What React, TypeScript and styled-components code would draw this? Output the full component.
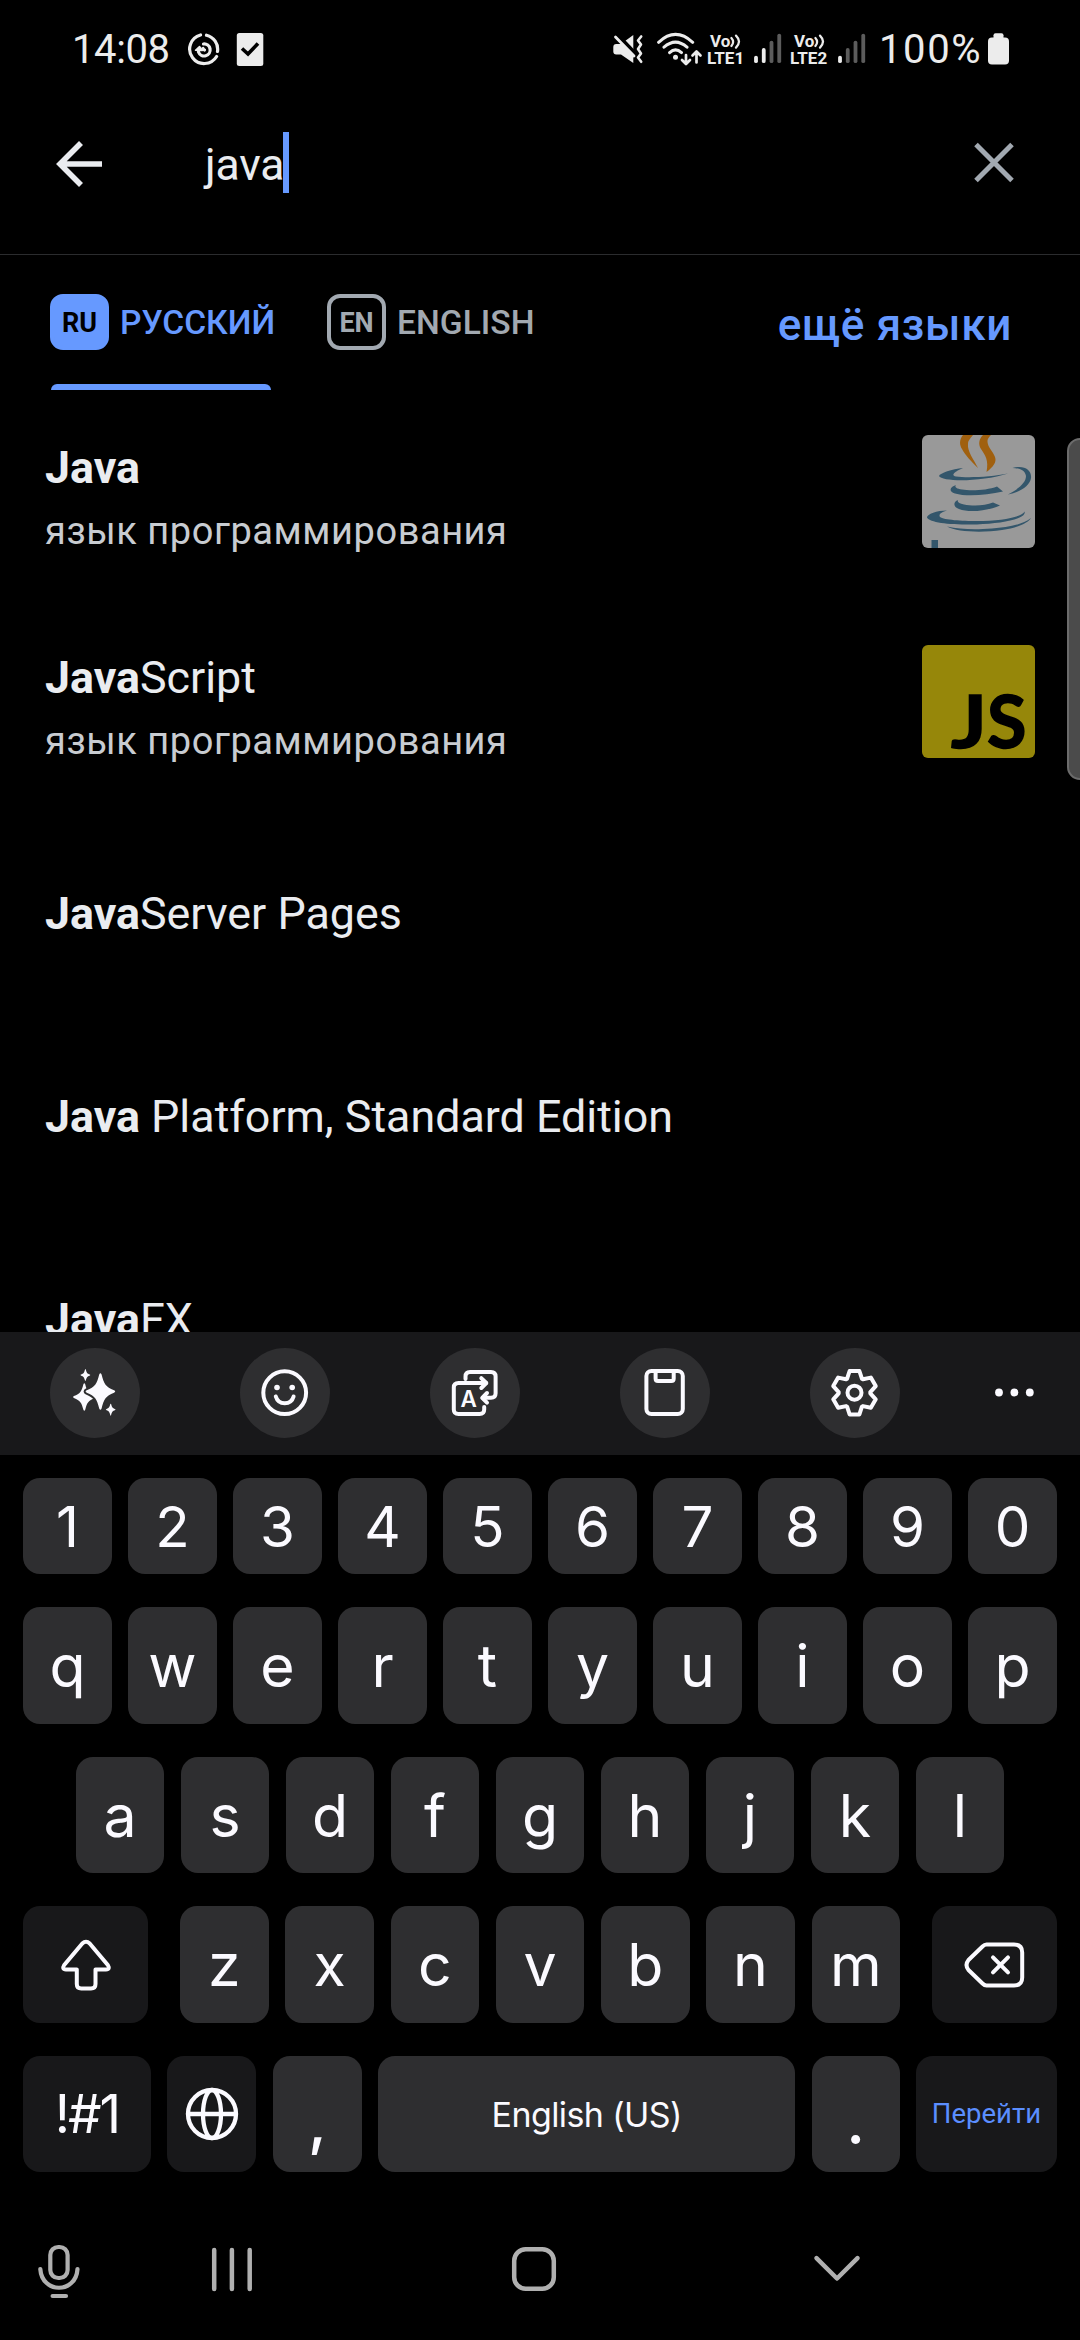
import React from "react";
import styled, { createGlobalStyle } from "styled-components";

const roboto = `Roboto, "Noto Sans", "Liberation Sans", sans-serif`;
const inter = `Inter, Roboto, "Liberation Sans", sans-serif`;

const Global = createGlobalStyle`
  html, body { margin: 0; background: #000; }
  * { box-sizing: border-box; }
  svg { display: block; flex: none; }
`;

const Screen = styled.div`
  width: 1080px;
  height: 2340px;
  background: #000;
  color: #eaecf0;
  font-family: ${roboto};
  display: flex;
  flex-direction: column;
  position: relative;
  overflow: hidden;
`;

/* ---------- status bar ---------- */

const StatusBar = styled.header`
  height: 99px;
  padding: 0 71px 0 72px;
  display: flex;
  align-items: center;
  justify-content: space-between;
  color: #ececec;
`;

const StatusLeft = styled.div`
  display: grid;
  grid-template-columns: 114px 50px 28px;
  align-items: center;
`;

const StatusRight = styled.div`
  display: grid;
  grid-template-columns: 44px 50px 46px 37px 47px 42px 109px 21px;
  align-items: center;
`;

const StatusText = styled.span<{ $spacing?: number }>`
  font-size: 40px;
  line-height: 48px;
  letter-spacing: ${(p) => p.$spacing ?? 0}px;
  white-space: nowrap;
`;

const Volte = styled.div<{ $indent: number }>`
  font-size: 17px;
  line-height: 17px;
  font-weight: 700;
  display: flex;
  flex-direction: column;
  & > div {
    display: flex;
    padding-left: ${(p) => p.$indent}px;
  }
`;

const VolteMark = ({ sim, indent }: { sim: number; indent: number }) => (
  <Volte $indent={indent}>
    <div>
      Vo
      <svg width="12" height="17" viewBox="0 0 12 17" fill="none" stroke="#ececec" strokeWidth="2.2" strokeLinecap="round">
        <path d="M1.4 5q3.4 3.8 0 8M6 2.600q6 6 0 12" />
      </svg>
    </div>
    <span>LTE{sim}</span>
  </Volte>
);

const Signal = ({ level }: { level: number }) => (
  <svg width="30" height="39" viewBox="0 30 30 39" strokeWidth="3.8" strokeLinecap="round">
    {[57.6, 50, 42.6, 35.6].map((top, i) => (
      <path key={top} d={`M${3 + i * 7.75} ${top}V61.2`} stroke={i < level ? "#ececec" : "#5c5c5c"} />
    ))}
  </svg>
);

/* ---------- search header ---------- */

const SearchBar = styled.div`
  height: 156px;
  border-bottom: 1px solid #2b2c2e;
  padding: 0 66px 25px 56px;
  display: flex;
  align-items: center;
`;

const Query = styled.div`
  flex: 1;
  margin-left: 102px;
  display: flex;
  align-items: center;
  font-size: 44.5px;
  line-height: 56px;
  padding-top: 1px;
  letter-spacing: -0.2px;
`;

const Caret = styled.i`
  width: 6px;
  height: 61px;
  background: #6699ff;
  margin: -4px 0 0 -1px;
`;

/* ---------- language tabs ---------- */

const Tabs = styled.nav`
  height: 135px;
  padding: 39px 68px 0 50px;
  display: flex;
  align-items: flex-start;
`;

const Tab = styled.div<{ $active?: boolean }>`
  width: 277px;
  display: flex;
  flex-direction: column;
  color: ${(p) => (p.$active ? "#6699ff" : "#a2a9b1")};
  &::after {
    content: "";
    display: ${(p) => (p.$active ? "block" : "none")};
    width: 220px;
    height: 6px;
    margin: 34px 0 0 1px;
    border-radius: 6px 6px 0 0;
    background: #6699ff;
  }
`;

const TabLabel = styled.div`
  height: 56px;
  display: flex;
  align-items: center;
  gap: 11px;
  font-size: 33.6px;
  font-weight: 500;
  line-height: 56px;
  white-space: nowrap;
  & > span:last-child { padding-top: 2px; }
`;

const Code = styled.span<{ $active?: boolean }>`
  width: 59px;
  height: 56px;
  border-radius: 13px;
  border: 4px solid ${(p) => (p.$active ? "#6699ff" : "#a2a9b1")};
  background: ${(p) => (p.$active ? "#6699ff" : "transparent")};
  color: ${(p) => (p.$active ? "#000" : "#a2a9b1")};
  font-size: 27px;
  font-weight: 700;
  line-height: 51px;
  text-align: center;
`;

const MoreLanguages = styled.div`
  margin-left: auto;
  color: #6699ff;
  font-size: 44px;
  font-weight: 500;
  line-height: 62px;
  letter-spacing: 0.7px;
`;

/* ---------- results ---------- */

const Results = styled.main`
  height: 942px;
  overflow: hidden;
`;

const RichGroup = styled.div`
  padding-bottom: 2px;
`;

const RichRow = styled.div`
  height: 210px;
  padding: 45px 45px 0 45px;
  display: flex;
  justify-content: space-between;
`;

const PlainRow = styled.div`
  height: 203px;
  padding-left: 45px;
  display: flex;
  align-items: center;
`;

const Title = styled.div`
  font-size: 44.8px;
  line-height: 60px;
  color: #eaecf0;
  white-space: pre;
  b { font-weight: 700; }
  ${RichRow} & { margin-top: 3px; }
`;

const Description = styled.div`
  font-size: 38px;
  line-height: 60px;
  margin-top: 3px;
  letter-spacing: 0.55px;
  color: #c8ccd1;
`;

const Thumb = styled.div<{ $bg: string }>`
  width: 113px;
  height: 113px;
  border-radius: 6px;
  background: ${(p) => p.$bg};
  svg { overflow: visible; }
`;

const EdgePanel = styled.div`
  position: absolute;
  top: 438px;
  right: -3px;
  width: 16px;
  height: 342px;
  border: 2px solid #6c6c6c;
  border-radius: 13px 0 0 13px;
  background: #4b4b4b;
`;

/* ---------- keyboard ---------- */

const Toolbar = styled.div`
  height: 123px;
  background: #18181a;
  padding: 16px 50px 0;
  display: flex;
  gap: 100px;
`;

const Tool = styled.div`
  width: 90px;
  height: 90px;
  border-radius: 50%;
  background: #2e2e30;
`;

const More = styled.div`
  width: 50px;
  height: 90px;
  margin-left: -10px;
`;

const Keys = styled.section`
  padding: 23px 23px 0;
  display: flex;
  flex-direction: column;
  gap: 33px;
  color: #fbfaff;
  font-family: ${inter};
`;

const KeyRow = styled.div<{ $h: number; $cols: string; $inset?: number }>`
  height: ${(p) => p.$h}px;
  display: grid;
  grid-template-columns: ${(p) => p.$cols};
  justify-content: space-between;
  padding: 0 ${(p) => p.$inset ?? 0}px;
`;

const Key = styled.div<{ $dark?: boolean; $size?: number; $shift?: number }>`
  border-radius: 17px;
  background: ${(p) => (p.$dark ? "#18181a" : "#2e2e30")};
  font-size: ${(p) => p.$size ?? 59}px;
  display: flex;
  align-items: center;
  justify-content: center;
  padding-top: ${(p) => p.$shift ?? 0}px;
  line-height: 1;
  white-space: nowrap;
`;

const KeyLabel = styled(Key)<{ $spacing?: number }>`
  letter-spacing: ${(p) => p.$spacing ?? 0}px;
`;

const PunctuationKey = styled(Key)`
  font-weight: 500;
`;

const GoKey = styled(Key)`
  color: #5b8eff;
  font-family: ${roboto};
`;

const MiddleKeys = styled.div`
  width: 720px;
  display: grid;
  grid-template-columns: repeat(7, 88.5px);
  justify-content: space-between;
`;

const NavBar = styled.footer`
  height: 168px;
  padding: 67px 0 0 32px;
  display: grid;
  grid-template-columns: 174px 300px 302px 60px;
`;

/* ---------- drawings ---------- */

const line = { fill: "none", stroke: "#fbfaff", strokeWidth: 4, strokeLinecap: "round", strokeLinejoin: "round" } as const;
const nav = { fill: "none", stroke: "#b0b0b0", strokeWidth: 4.5, strokeLinecap: "round", strokeLinejoin: "round" } as const;

/* four-pointed star with concave sides and slightly blunt tips */
const star = (x: number, y: number, w: number, h: number) => {
  const t = w * 0.08;
  const p = (dx: number, dy: number) => `${(x + dx).toFixed(2)} ${(y + dy).toFixed(2)}`;
  return (
    `M${p(t, -h + t)}C${p(w * 0.24, -h * 0.4)} ${p(w * 0.36, -h * 0.26)} ${p(w - t, -t)}Q${p(w + t, 0)} ${p(w - t, t)}` +
    `C${p(w * 0.36, h * 0.26)} ${p(w * 0.24, h * 0.4)} ${p(t, h - t)}Q${p(0, h + t)} ${p(-t, h - t)}` +
    `C${p(-w * 0.24, h * 0.4)} ${p(-w * 0.36, h * 0.26)} ${p(-w + t, t)}Q${p(-w - t, 0)} ${p(-w + t, -t)}` +
    `C${p(-w * 0.36, -h * 0.26)} ${p(-w * 0.24, -h * 0.4)} ${p(-t, -h + t)}Q${p(0, -h - t)} ${p(t, -h + t)}Z`
  );
};

const gearPoints = Array.from({ length: 6 }, (_, k) => (k * Math.PI) / 3)
  .flatMap((t) =>
    [[-7.4, -14], [-4.9, -21.7], [4.9, -21.7], [7.4, -14]].map(
      ([x, y]) => `${(x * Math.cos(t) - y * Math.sin(t)).toFixed(2)},${(x * Math.sin(t) + y * Math.cos(t)).toFixed(2)}`
    )
  )
  .join(" ");

const JavaLogo = () => (
  <svg width="113" height="113" viewBox="0 0 113 113" fill="#33566b">
    <g fill="#a0600f">
      <path d="M41 0C37 5 37.500 10 40 14C43 20 49 26 56 33C52 25 45 16 46 9C46 5 49 3 51 0Z" />
      <path d="M61 0C57 4 56 9 59 14C63 20 67 25 64.500 37C71 32 75 27 73 22C71 16 66 13 65.500 7C65 4 67 2 69 0Z" />
    </g>
    <path d="M41 33C30 34 18 38 17 41C20 47 60 47 86 38.500C70 42 45 43 34 41.500C27 40 36 35 41 33Z" />
    <path d="M90.500 33C102 29.500 110 35 109 43C108 51 98 57 86 59.500C96 54 104 48 104 41C103 35 98 33.500 90.500 33Z" />
    <path d="M34 50C27 52 27 57 33 58.500C45 62 65 60 81 56.500L75 51.500C65 55.500 48 56 40 54.500C35 54 32 52 34 50Z" />
    <path d="M36 65C31 67 31 72 37 74C47 78 65 76 78 70.500L71 67.500C63 71 50 71 42 69.500C37 68.500 35 67 36 65Z" />
    <path d="M25 75.500C15 75.500 5 79 5 82.500C8 88 30 90 55 89.500C80 88.500 105 84 102.500 76.500C100 82 80 86 55 86C40 86 22 85 18 82C16 79 20 77 25 75.500Z" />
    <path d="M25 91.500C35 97 60 98 80 95C95 93 106 88 109 83C100 90 85 92.500 70 93.500C50 95 38 94 25 91.500Z" />
    <path d="M9.500 105H16V113H9.500Z" />
  </svg>
);

const JsLogo = () => (
  <svg width="113" height="113" viewBox="0 0 113 113" fill="#000" fontFamily="Lato, sans-serif" fontWeight="700" fontSize="72" stroke="#000" strokeWidth="1.5">
    <text x="29" y="103" textLength="36" lengthAdjust="spacingAndGlyphs">J</text>
    <text x="65" y="103">S</text>
  </svg>
);

const digits = "1234567890".split("");
const top = "qwertyuiop".split("");
const home = "asdfghjkl".split("");
const bottom = "zxcvbnm".split("");

export default function App() {
  return (
    <Screen>
      <Global />
      <StatusBar>
        <StatusLeft>
          <StatusText $spacing={-0.4}>14:08</StatusText>
          <svg width="34" height="39" viewBox="186 30 34 39" fill="none" stroke="#ececec" strokeWidth="3.2" strokeLinecap="round">
            <path d="M200.500 35A14.500 14.500 0 1 0 216.600 56.500M206.500 35.200A14.500 14.500 0 0 1 217.500 51.500" />
            <path d="M203.500 44A6 6 0 1 1 198.500 52L198.500 49M204.500 50A2.500 2.500 0 0 1 203 48.500" />
            <path d="M195.500 50.200L199.500 46.500L202.500 50.500Z" fill="#ececec" strokeWidth="1.500" strokeLinejoin="round" />
          </svg>
          <svg width="28" height="39" viewBox="236.500 30 28 39">
            <rect x="237.300" y="33" width="26.500" height="33" rx="2.500" fill="#ececec" />
            <path d="M242.500 48.500L248.500 54L258.500 43.500" fill="none" stroke="#000" strokeWidth="3.600" />
          </svg>
        </StatusLeft>
        <StatusRight>
          <svg width="31" height="39" viewBox="613 30 31 39" fill="#ececec">
            <path d="M613.300 47Q613.300 44 616.300 44H621L633.300 35V63L621 54.500H616.300Q613.300 54.500 613.300 51.500Z" />
            <path d="M616.500 34L636 54.500" stroke="#000" strokeWidth="4" />
            <path d="M615.500 37L634 56" stroke="#ececec" strokeWidth="2.800" strokeLinecap="round" />
            <path d="M641.200 36.500L638 40.500L641 44.500L638 49L641 53.500L638 57.500L641.200 61.800" fill="none" stroke="#ececec" strokeWidth="2.600" strokeLinecap="round" strokeLinejoin="round" />
          </svg>
          <svg width="46" height="39" viewBox="657 30 46 39" fill="none" stroke="#ececec" strokeWidth="3" strokeLinecap="round" strokeLinejoin="round">
            <path d="M658.600 42.300Q675.500 26.500 692.700 42.300M664 47.200Q675.500 37 687 47.200M669.600 52.600Q675.500 47 681.500 52.600" />
            <circle cx="675.500" cy="57.300" r="2.500" fill="#ececec" stroke="none" />
            <path d="M686 55V63.500M682 60L686 64L690 60M696.500 62.500V52.500M692.500 55.500L696.500 51.500L700.500 55.500" strokeWidth="2.700" />
          </svg>
          <VolteMark sim={1} indent={3} />
          <Signal level={2} />
          <VolteMark sim={2} indent={4} />
          <Signal level={1} />
          <StatusText $spacing={1.6}>100%</StatusText>
          <svg width="21" height="39" viewBox="988 30 21 39" fill="#ececec">
            <rect x="993.500" y="33.300" width="10" height="8" rx="2" />
            <rect x="988" y="37.500" width="21" height="27" rx="4" />
          </svg>
        </StatusRight>
      </StatusBar>

      <SearchBar>
        <svg width="47" height="48" viewBox="56 140 47 48" fill="none" stroke="#eaecf0" strokeWidth="5.600">
          <path d="M102 164H60M81 143L60 164L81 185" />
        </svg>
        <Query>
          java
          <Caret />
        </Query>
        <svg width="40" height="44" viewBox="974 142 40 44" fill="none" stroke="#a2a9b1" strokeWidth="5">
          <path d="M976 144.500L1012 180.500M1012 144.500L976 180.500" />
        </svg>
      </SearchBar>

      <Tabs>
        <Tab $active>
          <TabLabel>
            <Code $active>RU</Code>
            <span>РУССКИЙ</span>
          </TabLabel>
        </Tab>
        <Tab>
          <TabLabel>
            <Code>EN</Code>
            <span>ENGLISH</span>
          </TabLabel>
        </Tab>
        <MoreLanguages>ещё языки</MoreLanguages>
      </Tabs>

      <Results>
        <RichGroup>
          <RichRow>
            <div>
              <Title><b>Java</b></Title>
              <Description>язык программирования</Description>
            </div>
            <Thumb $bg="#999999"><JavaLogo /></Thumb>
          </RichRow>
          <RichRow>
            <div>
              <Title><b>Java</b>Script</Title>
              <Description>язык программирования</Description>
            </div>
            <Thumb $bg="#96870a"><JsLogo /></Thumb>
          </RichRow>
        </RichGroup>
        <PlainRow><Title><b>Java</b>Server Pages</Title></PlainRow>
        <PlainRow><Title><b>Java</b> Platform, Standard Edition</Title></PlainRow>
        <PlainRow><Title><b>Java</b>FX</Title></PlainRow>
      </Results>
      <EdgePanel />

      <Toolbar>
        <Tool>
          <svg width="90" height="90" viewBox="50 1348 90 90" fill="#fbfaff">
            <path d={star(84.3, 1397, 11.3, 13.7)} />
            <path d={star(100.4, 1391.5, 14.8, 18.2)} stroke="#2e2e30" strokeWidth="4" />
            <path d={star(100.4, 1391.5, 14.8, 18.2)} />
            <path d={star(85.4, 1375, 4.9, 6)} />
            <path d={star(110.7, 1409.7, 4.9, 6)} />
          </svg>
        </Tool>
        <Tool>
          <svg width="90" height="90" viewBox="240 1348 90 90" {...line}>
            <circle cx="284.700" cy="1392.700" r="21.400" />
            <path d="M275.800 1396.500C278.500 1405.500 291 1405.500 293.600 1396.500" />
            <circle cx="277" cy="1387.500" r="2.800" fill="#fbfaff" stroke="none" />
            <circle cx="292.200" cy="1387.500" r="2.800" fill="#fbfaff" stroke="none" />
          </svg>
        </Tool>
        <Tool>
          <svg width="90" height="90" viewBox="430 1348 90 90" {...line}>
            <path d="M486 1383H458.500Q453.800 1383 453.800 1387.500V1409.500Q453.800 1414 458.500 1414H479.500Q484.200 1414 484.200 1409.500V1407" />
            <path d="M465.500 1379V1376.500Q465.500 1372 470 1372H491Q495.600 1372 495.600 1376.500V1393.300Q495.600 1397.800 491 1397.800H483" />
            <path d="M481.300 1378.200L486.300 1383L481.300 1388M487 1393L482.200 1397.800L487 1402.600" />
            <text x="468.700" y="1406.700" fill="#fbfaff" stroke="none" fontFamily={inter} fontWeight="600" fontSize="22.500" textAnchor="middle">A</text>
          </svg>
        </Tool>
        <Tool>
          <svg width="90" height="90" viewBox="620 1348 90 90" {...line}>
            <rect x="646.400" y="1371" width="36.400" height="43" rx="5" />
            <path d="M655.600 1371V1378.500Q655.600 1381 658 1381H671.300Q673.700 1381 673.700 1378.500V1371" />
          </svg>
        </Tool>
        <Tool>
          <svg width="90" height="90" viewBox="-44.500 -44.700 90 90" {...line}>
            <polygon points={gearPoints} />
            <circle r="7" />
          </svg>
        </Tool>
        <More>
          <svg width="50" height="90" viewBox="990 1348 50 90" fill="#fbfaff">
            {[999, 1014.4, 1029.8].map((x) => <circle key={x} cx={x} cy="1392.500" r="3.900" />)}
          </svg>
        </More>
      </Toolbar>

      <Keys>
        <KeyRow $h={96} $cols="repeat(10, 89px)">
          {digits.map((k) => <Key key={k} $size={56.5} $shift={3}>{k}</Key>)}
        </KeyRow>
        <KeyRow $h={117} $cols="repeat(10, 89px)">
          {top.map((k) => <Key key={k}>{k}</Key>)}
        </KeyRow>
        <KeyRow $h={116} $cols="repeat(9, 88px)" $inset={53}>
          {home.map((k) => <Key key={k}>{k}</Key>)}
        </KeyRow>
        <KeyRow $h={117} $cols="125px 720px 125px">
          <Key $dark>
            <svg width="60" height="60" viewBox="55.500 1934.500 60 60" {...line}>
              <path d="M81.800 1943Q85.500 1939.500 89.200 1943L107.300 1964.500Q110 1969 105.500 1969H95V1983.500Q95 1988 90.500 1988H80.800Q76.300 1988 76.300 1983.500V1969H65.500Q61 1969 63.700 1964.500Z" />
            </svg>
          </Key>
          <MiddleKeys>
            {bottom.map((k) => <Key key={k}>{k}</Key>)}
          </MiddleKeys>
          <Key $dark>
            <svg width="64" height="60" viewBox="962.500 1934.500 64 60" {...line}>
              <path d="M986 1944H1013.500Q1021.700 1944 1021.700 1952V1977Q1021.700 1985 1013.500 1985H986Q984 1985 982 1983L968 1969.500Q964 1964.500 968 1959.500L982 1946Q984 1944 986 1944Z" />
              <path d="M992.500 1956.800L1007.500 1971.800M1007.500 1956.800L992.500 1971.800" />
            </svg>
          </Key>
        </KeyRow>
        <KeyRow $h={116} $cols="128px 89px 89px 417px 88px 141px">
          <KeyLabel $dark $size={53} $spacing={-2}>!#1</KeyLabel>
          <Key $dark>
            <svg width="60" height="60" viewBox="-30 -30 60 60" {...line} strokeWidth="4.300">
              <circle r="24" />
              <ellipse rx="9" ry="24" />
              <path d="M-24 0H24" />
            </svg>
          </Key>
          <PunctuationKey $size={62} $shift={15}>,</PunctuationKey>
          <KeyLabel $size={34} $spacing={-0.6} $shift={1}>English (US)</KeyLabel>
          <PunctuationKey $size={62} $shift={15}>.</PunctuationKey>
          <GoKey $dark $size={27.5}>Перейти</GoKey>
        </KeyRow>
      </Keys>

      <NavBar>
        <svg width="54" height="64" viewBox="32 2239 54 64" {...nav} strokeWidth="4.200">
          <rect x="50.300" y="2247" width="17.300" height="31" rx="8" />
          <path d="M40.300 2269C42 2294 76 2294 77.500 2269M52.600 2296H66" />
        </svg>
        <svg width="50" height="64" viewBox="206 2239 50 64" {...nav}>
          <path d="M214.200 2250V2289M231.900 2250V2289M249.700 2250V2289" />
        </svg>
        <svg width="60" height="64" viewBox="506 2239 60 64" {...nav}>
          <rect x="514.200" y="2249.200" width="39.600" height="39.600" rx="11.500" />
        </svg>
        <svg width="60" height="64" viewBox="808 2239 60 64" {...nav}>
          <path d="M816.500 2258.200L837 2278.500L857.500 2258.200" />
        </svg>
      </NavBar>
    </Screen>
  );
}
